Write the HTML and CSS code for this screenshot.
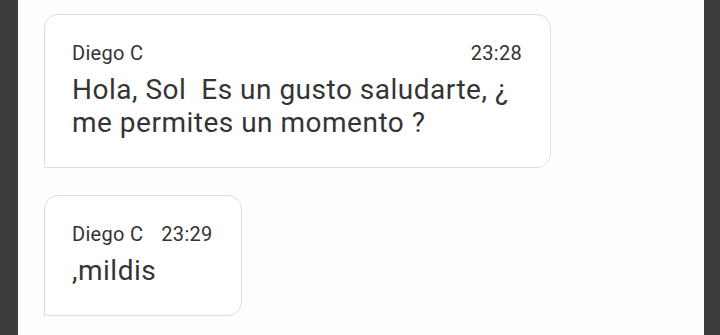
FILE: index.html
```html
<!DOCTYPE html>
<html lang="es">
<head>
    <meta charset="UTF-8">
    <meta name="viewport" content="width=device-width, initial-scale=1.0">
    <title>Chat</title>
    <link rel="stylesheet" href="styles.css">
</head>
<body>

<div class="frame">
    <div class="side"></div>
    <div class="chat">
        <div class="bubble">
            <div class="bubble-head">
                <span class="name">Diego C</span>
                <span class="time">23:28</span>
            </div>
            <div class="text">Hola, Sol&nbsp; Es un gusto saludarte, ¿ me permites un momento ?</div>
        </div>
        <div class="bubble">
            <div class="bubble-head">
                <span class="name">Diego C</span>
                <span class="time">23:29</span>
            </div>
            <div class="text">,mildis</div>
        </div>
    </div>
    <div class="side side-right"></div>
</div>

</body>
</html>
```

FILE: styles.css
```css
html, body {
    margin: 0;
    height: 100%;
}
body {
    font-family: Roboto, "Liberation Sans", Arial, sans-serif;
    background-color: #fefefe;
    color: #343434;
}
.frame {
    display: flex;
    height: 100%;
}
.side {
    width: 18px;
    background-color: #3d3d3d;
}
.side-right {
    width: 16px;
}
.chat {
    flex: 1;
    display: flex;
    flex-direction: column;
    align-items: flex-start;
    gap: 27px;
    padding: 14px 0 0 26px;
}
.bubble {
    box-sizing: border-box;
    max-width: 507px;
    padding: 26px 28px 28px 27px;
    background-color: #fff;
    border: 1px solid #dedede;
    border-radius: 14px 14px 14px 0;
}
.bubble-head {
    display: flex;
    justify-content: space-between;
    gap: 18px;
    font-size: 20px;
    line-height: 24px;
    letter-spacing: 0.3px;
}
.text {
    margin-top: 8px;
    font-size: 28px;
    line-height: 33px;
    letter-spacing: 0.5px;
}
```
